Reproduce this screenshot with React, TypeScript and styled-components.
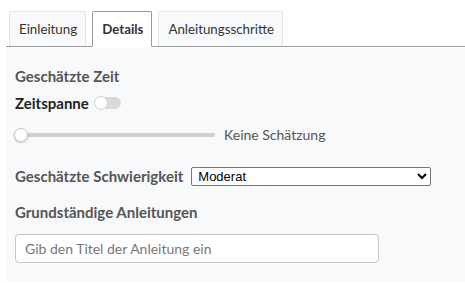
import styled, { createGlobalStyle } from "styled-components";

const GlobalStyle = createGlobalStyle`
  body {
    margin: 0;
    background: #ffffff;
    font-family: Lato, "Open Sans", sans-serif;
  }
`;

const Page = styled.div`
  padding: 11px 0 0 6px;
`;

const TabBar = styled.div`
  display: flex;
  gap: 6px;
  padding-left: 3px;
  border-bottom: 1px solid #9a9a9a;
`;

const Tab = styled.div<{ $active?: boolean }>`
  height: 34px;
  padding: 0 8px 0 9px;
  display: flex;
  align-items: center;
  font-size: 13.3px;
  color: #333;
  font-weight: ${(p) => (p.$active ? 700 : 400)};
  background: ${(p) => (p.$active ? "#fff" : "#f8f9fa")};
  border: 1px solid ${(p) => (p.$active ? "#9a9a9a" : "#e3e3e3")};
  border-bottom: ${(p) => (p.$active ? "1px solid #fff" : "none")};
  margin-bottom: ${(p) => (p.$active ? "-1px" : "0")};
  border-radius: 2px 2px 0 0;
`;

const Panel = styled.div`
  margin-top: 1px;
  background: #f8f9fa;
  padding: 18px 9px 18px 9px;
  height: 234px;
  box-sizing: border-box;
`;

const Heading = styled.div<{ $mt?: number }>`
  font-size: 15px;
  font-weight: 700;
  color: #555;
  line-height: 20px;
  margin-top: ${(p) => p.$mt ?? 0}px;
`;

const Row = styled.div<{ $gap?: number; $mt?: number }>`
  display: flex;
  align-items: center;
  gap: ${(p) => p.$gap ?? 8}px;
  margin-top: ${(p) => p.$mt ?? 0}px;
`;

const Label = styled.span`
  font-size: 15px;
  font-weight: 700;
  color: #222;
`;

const Toggle = styled.span`
  width: 26px;
  height: 12px;
  border-radius: 6px;
  background: #d9d9d9;
  position: relative;
  &::before {
    content: "";
    position: absolute;
    left: -1px;
    top: -1px;
    width: 12px;
    height: 12px;
    border-radius: 50%;
    background: #fff;
    border: 1px solid #d0d0d0;
  }
`;

const Track = styled.span`
  width: 200px;
  height: 4px;
  border-radius: 2px;
  background: #d0d0d0;
  position: relative;
  &::before {
    content: "";
    position: absolute;
    left: -1px;
    top: -5px;
    width: 12px;
    height: 12px;
    border-radius: 50%;
    background: #fff;
    border: 1px solid #c8c8c8;
    box-shadow: 0 1px 2px rgba(0, 0, 0, 0.2);
  }
`;

const Hint = styled.span`
  font-size: 14px;
  color: #555;
`;

const Select = styled.select`
  width: 240px;
  height: 19px;
  font-family: "Liberation Sans", Arial, sans-serif;
  font-size: 13px;
  color: #000;
  background: #fff;
  border: 1px solid #767676;
  border-radius: 2px;
  padding: 0 2px;
`;

const TextInput = styled.input`
  display: block;
  width: 364px;
  height: 29px;
  box-sizing: border-box;
  border: 1px solid #c4c4c4;
  border-radius: 4px;
  background: #fff;
  padding: 0 9px;
  font-family: Lato, sans-serif;
  font-size: 14px;
  &::placeholder {
    color: #777;
  }
`;

export default function App() {
  return (
    <Page>
      <GlobalStyle />
      <TabBar>
        <Tab>Einleitung</Tab>
        <Tab $active>Details</Tab>
        <Tab>Anleitungsschritte</Tab>
      </TabBar>
      <Panel>
        <Heading>Geschätzte Zeit</Heading>
        <Row $gap={6} $mt={8}>
          <Label>Zeitspanne</Label>
          <Toggle />
        </Row>
        <Row $gap={9} $mt={14}>
          <Track />
          <Hint>Keine Schätzung</Hint>
        </Row>
        <Row $gap={8} $mt={23}>
          <Heading>Geschätzte Schwierigkeit</Heading>
          <Select defaultValue="Moderat">
            <option>Einfach</option>
            <option>Moderat</option>
            <option>Schwierig</option>
          </Select>
        </Row>
        <Heading $mt={16}>Grundständige Anleitungen</Heading>
        <Row $mt={12}>
          <TextInput placeholder="Gib den Titel der Anleitung ein" />
        </Row>
      </Panel>
    </Page>
  );
}
